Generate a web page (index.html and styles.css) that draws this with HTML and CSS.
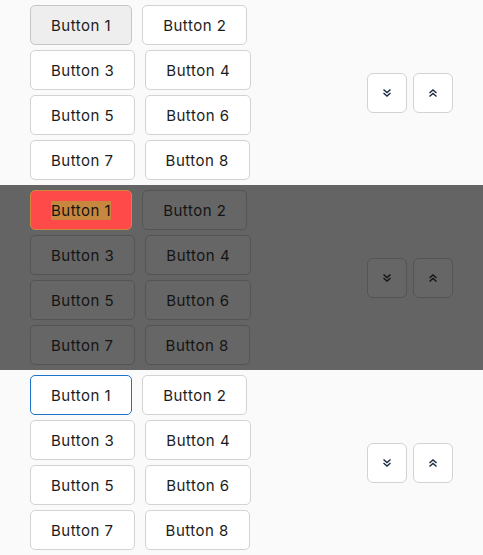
FILE: index.html
```html
<!DOCTYPE html>
<html>
<head>
<meta charset="utf-8">
<link rel="stylesheet" href="styles.css">
</head>
<body>
<section class="panel">
  <div class="group">
    <div class="row"><button class="btn pressed">Button 1</button><button class="btn">Button 2</button></div>
    <div class="row"><button class="btn">Button 3</button><button class="btn">Button 4</button></div>
    <div class="row"><button class="btn">Button 5</button><button class="btn">Button 6</button></div>
    <div class="row"><button class="btn">Button 7</button><button class="btn">Button 8</button></div>
  </div>
  <div class="icons">
    <button class="icon-btn"><svg width="10" height="10" viewBox="0 0 10 10"><path d="M1.5 1.5l3.5 3 3.5-3M1.5 5l3.5 3 3.5-3" fill="none" stroke="currentColor" stroke-width="1.4"/></svg></button>
    <button class="icon-btn"><svg width="10" height="10" viewBox="0 0 10 10"><path d="M1.5 5l3.5-3 3.5 3M1.5 8.5l3.5-3 3.5 3" fill="none" stroke="currentColor" stroke-width="1.4"/></svg></button>
  </div>
</section>
<section class="panel dim">
  <div class="group">
    <div class="row"><button class="btn hl"><span class="hl-text">Button 1</span></button><button class="btn">Button 2</button></div>
    <div class="row"><button class="btn">Button 3</button><button class="btn">Button 4</button></div>
    <div class="row"><button class="btn">Button 5</button><button class="btn">Button 6</button></div>
    <div class="row"><button class="btn">Button 7</button><button class="btn">Button 8</button></div>
  </div>
  <div class="icons">
    <button class="icon-btn"><svg width="10" height="10" viewBox="0 0 10 10"><path d="M1.5 1.5l3.5 3 3.5-3M1.5 5l3.5 3 3.5-3" fill="none" stroke="currentColor" stroke-width="1.4"/></svg></button>
    <button class="icon-btn"><svg width="10" height="10" viewBox="0 0 10 10"><path d="M1.5 5l3.5-3 3.5 3M1.5 8.5l3.5-3 3.5 3" fill="none" stroke="currentColor" stroke-width="1.4"/></svg></button>
  </div>
</section>
<section class="panel">
  <div class="group">
    <div class="row"><button class="btn focused">Button 1</button><button class="btn">Button 2</button></div>
    <div class="row"><button class="btn">Button 3</button><button class="btn">Button 4</button></div>
    <div class="row"><button class="btn">Button 5</button><button class="btn">Button 6</button></div>
    <div class="row"><button class="btn">Button 7</button><button class="btn">Button 8</button></div>
  </div>
  <div class="icons">
    <button class="icon-btn"><svg width="10" height="10" viewBox="0 0 10 10"><path d="M1.5 1.5l3.5 3 3.5-3M1.5 5l3.5 3 3.5-3" fill="none" stroke="currentColor" stroke-width="1.4"/></svg></button>
    <button class="icon-btn"><svg width="10" height="10" viewBox="0 0 10 10"><path d="M1.5 5l3.5-3 3.5 3M1.5 8.5l3.5-3 3.5 3" fill="none" stroke="currentColor" stroke-width="1.4"/></svg></button>
  </div>
</section>
</body>
</html>
```

FILE: styles.css
```css
html, body {
  margin: 0;
  padding: 0;
  background: #fafafa;
  font-family: "Inter", "Open Sans", sans-serif;
}
.panel {
  height: 185px;
  box-sizing: border-box;
  padding: 0 30px;
  display: flex;
  align-items: center;
  justify-content: space-between;
}
.group {
  display: flex;
  flex-direction: column;
  gap: 5px;
}
.row {
  display: flex;
  gap: 10px;
}
.btn {
  height: 40px;
  padding: 0 20px;
  border: 1px solid #d3d3d3;
  border-radius: 5px;
  background: #ffffff;
  color: #1c1c1c;
  font-family: inherit;
  font-size: 15px;
  letter-spacing: 0.5px;
  cursor: pointer;
}
.btn.pressed {
  background: #eeeeee;
  border-color: #c6c6c6;
}
.btn.focused {
  border-color: #1b74c9;
}
.icons {
  display: flex;
  gap: 6px;
}
.icon-btn {
  width: 40px;
  height: 40px;
  padding: 0;
  border: 1px solid #d3d3d3;
  border-radius: 6px;
  background: #ffffff;
  color: #1c2a40;
  display: flex;
  align-items: center;
  justify-content: center;
}
.dim {
  background: #646464;
}
.dim .btn,
.dim .icon-btn {
  background: #666666;
  border-color: #545454;
  color: #141414;
}
.dim .btn.hl {
  background: #ff4a4a;
  border-color: #c98a3e;
}
.hl-text {
  background: #c8873e;
}
```
